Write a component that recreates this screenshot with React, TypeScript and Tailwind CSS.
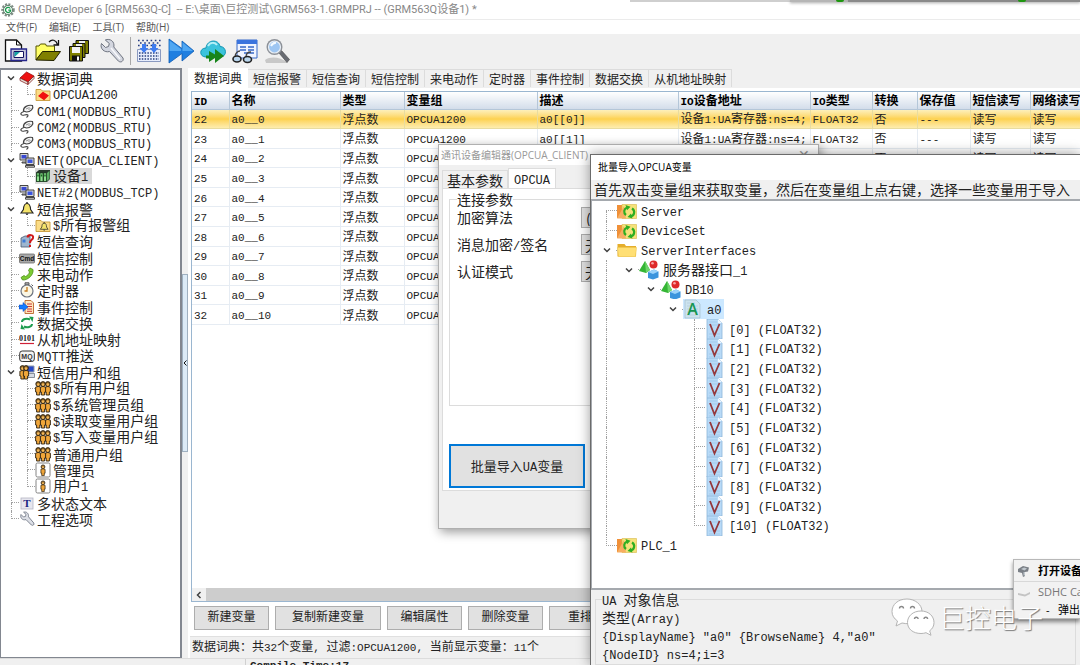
import { useState } from 'react';
import type { ReactNode } from 'react';
import clsx from 'clsx';

const UI_FONT = "font-['Open_Sans','Noto_Sans_CJK_SC',sans-serif]";
const TITLE_FONT = "font-['Roboto','Noto_Sans_CJK_SC',sans-serif]";
const SONG_FONT = "font-['Noto_Sans_CJK_SC',sans-serif]";

type IconName =
  | 'book' | 'folderBook' | 'serial' | 'net' | 'device' | 'bell' | 'folderBell' | 'query'
  | 'cmd' | 'phone' | 'timer' | 'event' | 'swap' | 'binary' | 'mqtt' | 'userGroup'
  | 'group' | 'user' | 'text' | 'wrench';

interface TreeRow {
  label: string;
  icon: IconName;
  depth: number;
  open?: boolean;
  last?: boolean;
  first?: boolean;
}

const PROJECT_TREE: TreeRow[] = [
  { label: '数据词典', icon: 'book', depth: 0, open: true, first: true },
  { label: 'OPCUA1200', icon: 'folderBook', depth: 1, last: true },
  { label: 'COM1(MODBUS_RTU)', icon: 'serial', depth: 0 },
  { label: 'COM2(MODBUS_RTU)', icon: 'serial', depth: 0 },
  { label: 'COM3(MODBUS_RTU)', icon: 'serial', depth: 0 },
  { label: 'NET(OPCUA_CLIENT)', icon: 'net', depth: 0, open: true },
  { label: '设备1', icon: 'device', depth: 1, last: true },
  { label: 'NET#2(MODBUS_TCP)', icon: 'net', depth: 0 },
  { label: '短信报警', icon: 'bell', depth: 0, open: true },
  { label: '$所有报警组', icon: 'folderBell', depth: 1, last: true },
  { label: '短信查询', icon: 'query', depth: 0 },
  { label: '短信控制', icon: 'cmd', depth: 0 },
  { label: '来电动作', icon: 'phone', depth: 0 },
  { label: '定时器', icon: 'timer', depth: 0 },
  { label: '事件控制', icon: 'event', depth: 0 },
  { label: '数据交换', icon: 'swap', depth: 0 },
  { label: '从机地址映射', icon: 'binary', depth: 0 },
  { label: 'MQTT推送', icon: 'mqtt', depth: 0 },
  { label: '短信用户和组', icon: 'userGroup', depth: 0, open: true },
  { label: '$所有用户组', icon: 'group', depth: 1 },
  { label: '$系统管理员组', icon: 'group', depth: 1 },
  { label: '$读取变量用户组', icon: 'group', depth: 1 },
  { label: '$写入变量用户组', icon: 'group', depth: 1 },
  { label: '普通用户组', icon: 'group', depth: 1 },
  { label: '管理员', icon: 'user', depth: 1 },
  { label: '用户1', icon: 'user', depth: 1, last: true },
  { label: '多状态文本', icon: 'text', depth: 0 },
  { label: '工程选项', icon: 'wrench', depth: 0, last: true },
];

type NodeIcon = 'server' | 'folder' | 'object' | 'array' | 'value';

interface OpcNode {
  label: string;
  icon: NodeIcon;
  depth: number;
  open?: boolean;
  first?: boolean;
  last?: boolean;
}

const OPC_TREE: OpcNode[] = [
  { label: 'Server', icon: 'server', depth: 0, first: true },
  { label: 'DeviceSet', icon: 'server', depth: 0 },
  { label: 'ServerInterfaces', icon: 'folder', depth: 0, open: true },
  { label: '服务器接口_1', icon: 'object', depth: 1, open: true, last: true },
  { label: 'DB10', icon: 'object', depth: 2, open: true, last: true },
  { label: 'a0', icon: 'array', depth: 3, open: true, last: true },
  ...Array.from({ length: 11 }, (_, i): OpcNode => ({
    label: `[${i}] (FLOAT32)`,
    icon: 'value',
    depth: 4,
    last: i === 10,
  })),
  { label: 'PLC_1', icon: 'server', depth: 0, last: true },
];

const TABS = ['数据词典', '短信报警', '短信查询', '短信控制', '来电动作', '定时器', '事件控制', '数据交换', '从机地址映射'];

const COLUMNS = [
  { title: 'ID', width: 'w-[37px]' },
  { title: '名称', width: 'w-[111px]' },
  { title: '类型', width: 'w-[64px]' },
  { title: '变量组', width: 'w-[133px]' },
  { title: '描述', width: 'w-[141px]' },
  { title: 'IO设备地址', width: 'w-[132px]' },
  { title: 'IO类型', width: 'w-[62px]' },
  { title: '转换', width: 'w-[45px]' },
  { title: '保存值', width: 'w-[53px]' },
  { title: '短信读写', width: 'w-[60px]' },
  { title: '网络读写', width: 'w-[60px]' },
];

const VARIABLES = Array.from({ length: 11 }, (_, i) => [
  String(22 + i), `a0__${i}`, '浮点数', 'OPCUA1200', `a0[[${i}]]`,
  '设备1:UA寄存器:ns=4;', 'FLOAT32', '否', '---', '读写', '读写',
]);

const ACTIONS = [
  { label: '新建变量', width: 'w-[75px]' },
  { label: '复制新建变量', width: 'w-[106px]' },
  { label: '编辑属性', width: 'w-[75px]' },
  { label: '删除变量', width: 'w-[75px]' },
  { label: '重排序号', width: 'w-[86px]' },
];

// Latin runs are half as wide as the Chinese characters beside them
function Song({ text, small }: { text: string; small?: boolean }) {
  return (
    <>
      {text.split(/([\x20-\x7e]+)/).filter(Boolean).map((part, i) =>
        /^[\x20-\x7e]/.test(part) ? (
          <span
            key={i}
            className={clsx("leading-none whitespace-pre font-['Liberation_Mono',monospace]", small ? 'text-[11px]' : 'text-[12px]')}
          >
            {part}
          </span>
        ) : (
          part
        ),
      )}
    </>
  );
}

function Chevron({ className }: { className?: string }) {
  return (
    <svg viewBox="0 0 8 8" className={clsx('h-2 w-2', className)} fill="none" stroke="#404040" strokeWidth="1.5">
      <path d="M1 2.5 4 5.5 7 2.5" />
    </svg>
  );
}

const personShape = (x: number) => (
  <g key={x}>
    <path d={`M${x - 2.6} 7.2q2.600-1.600 5.200 0v4.800h-1v3h-3.200v-3h-1z`} fill="#f0a63a" stroke="#2b2010" strokeWidth=".9" />
    <circle cx={x} cy="4" r="2.4" fill="#8a6224" stroke="#2b2010" strokeWidth=".9" />
    <circle cx={x} cy="4.600" r="1.3" fill="#f5b95a" />
  </g>
);

const folderBase = (
  <path d="M1 3.5h5l1.5 1.5H15v9.5H1z" fill="#fbdc86" stroke="#c79a3a" strokeWidth=".9" />
);

const bellShape = (
  <>
    <path d="M8 2.5c-3 0-3.4 3-3.6 6L2 12h12l-2.4-3.5c-.2-3-.6-6-3.6-6z" fill="#f4e36a" stroke="#222" strokeWidth="1.1" />
    <path d="M6.5 12.5q1.500 3 3 0zM7.300 1h1.400v1.500H7.300z" fill="#222" />
  </>
);

const wrenchShape = (
  <path
    d="M2 3.500 4.500 6l2-.6.5-2L4.600 1.200C7.500.3 10 2.500 9.500 5.800l5.300 6.200c.8 1.700-1 3-2.400 2L7 8.600C3.500 9.700.8 6.700 2 3.500z"
    fill="#dcdfe6"
    stroke="#747b88"
    strokeWidth=".9"
  />
);

const TREE_ICONS: Record<IconName, ReactNode> = {
  book: (
    <>
      <path d="M1 8 7.500 2 15 6 9 12z" fill="#ee1111" stroke="#8a0000" strokeWidth=".7" />
      <path d="M1 8v2.500L9 14.500V12zM9 12l6-6v2.500l-6 6z" fill="#e9e0d8" stroke="#7a1010" strokeWidth=".7" />
    </>
  ),
  folderBook: <>{folderBase}<path d="M4 10 8 6.500l5 3-4 4z" fill="#f01010" stroke="#f01010" strokeWidth="1.200" /></>,
  serial: (
    <>
      <path d="M4.500 8C4 4 9 1.500 13.500 2.500c1.500 3-2 6.500-6 6.500z" fill="#f4f4f4" stroke="#444" strokeWidth="1.200" />
      <path d="M7 6l3.500-1.500M9.500 7l2-2" stroke="#777" strokeWidth=".8" />
      <path d="M5 8.500C0 10 1.500 13 5.500 12s4.500.5 2 2.500" fill="none" stroke="#444" strokeWidth="1.200" />
    </>
  ),
  net: (
    <>
      <path d="M1 1.500h8v6.500H1zM3 10h5v1H3z" fill="#d8d8d8" stroke="#333" strokeWidth=".9" />
      <path d="M2.500 3h5v3.500h-5z" fill="#3849d0" />
      <path d="M7 6h8v6.500H7zM6.500 13.500h9v1.700h-9z" fill="#d8d8d8" stroke="#333" strokeWidth=".9" />
      <path d="M8.500 7.500h5v3.500h-5z" fill="#3b55e0" />
    </>
  ),
  device: (
    <>
      <path d="M1 4.500 4 2h11v9l-3 3H1z" fill="#28382c" />
      <path d="M1.500 5h3v8.500h-3zM5 5h3v8.500H5zM8.500 5h3v8.500h-3z" fill="#8fe08f" stroke="#173a1c" strokeWidth=".7" />
      <path d="M2.300 6.500h1.400v2H2.300zM5.800 6.500h1.400v2H5.800zM9.300 6.500h1.400v2H9.300z" fill="#176c20" />
      <path d="M12 5l2.500-2.300v8L12 13z" fill="#5cae62" />
    </>
  ),
  bell: bellShape,
  folderBell: <>{folderBase}<g transform="translate(4 4.500) scale(.65)">{bellShape}</g></>,
  query: (
    <>
      <path d="M2 5l4-2h5v11H2z" fill="#9eb6cf" stroke="#46596e" strokeWidth=".8" />
      <path d="M3.500 6.500h3v3h-3z" fill="#3d7bd5" />
      <path d="M8.500 4.500C9 1 15 1.500 14 5c-.5 2-3 2-3 5M11 12v2" fill="none" stroke="#d01818" strokeWidth="2" />
    </>
  ),
  cmd: (
    <>
      <rect x=".5" y="4" width="15" height="9" rx="1" fill="#a9a9a9" stroke="#6c6c6c" strokeWidth=".8" />
      <text x="8" y="11" textAnchor="middle" fontSize="6.500" fontWeight="700" fontFamily="Liberation Sans" fill="#111">Cmd</text>
    </>
  ),
  phone: (
    <path d="M11 2l3 1.500c1 5-5 11-10.500 10.500L2 11.500l3-2 1.500 1c2-.8 3.500-2.500 4-4.500L9.500 4.500z" fill="#7ccb34" stroke="#4c8e17" strokeWidth=".8" />
  ),
  timer: (
    <>
      <path d="M6 .8h4v2H6zM12.500 2.500l1.500 1.500" fill="#bbb" stroke="#555" strokeWidth="1" />
      <circle cx="8" cy="9" r="6" fill="#fbf7e4" stroke="#6d7480" strokeWidth="1.200" />
      <path d="M8 5v4H5.500" fill="none" stroke="#c67a1c" strokeWidth="1.300" />
    </>
  ),
  event: (
    <>
      <path d="M6 1.500h6l2.500 2.500v10.500H6z" fill="#ffe6bd" stroke="#b9672a" strokeWidth=".9" />
      <path d="M8 5h5M8 7.500h5M8 10h5M8 12.300h5" stroke="#cc3a3a" strokeWidth="1" />
      <path d="M0 6h4V3.500L9 8l-5 4.500V10H0z" fill="#167bff" stroke="#0843b8" strokeWidth=".5" />
    </>
  ),
  swap: (
    <g fill="none" stroke="#1d9c4e" strokeWidth="2">
      <path d="M3 7c0-3 5-4 8-2.500" />
      <path d="M13 9c0 3-5 4-8 2.500" />
      <path d="M10 1.500l4.500.5-1 5zM6 14.500l-4.500-.5 1-5z" fill="#1d9c4e" stroke="none" />
    </g>
  ),
  binary: (
    <>
      <text x="8" y="10" textAnchor="middle" fontSize="8" fontWeight="700" fontFamily="Liberation Serif" fill="#222">0101</text>
      <path d="M1 12.500h14" stroke="#d02038" strokeWidth="1.200" />
    </>
  ),
  mqtt: (
    <>
      <rect x=".7" y="3" width="14.600" height="10.500" rx="2.500" fill="#f4f4f4" stroke="#333" />
      <text x="8" y="10.800" textAnchor="middle" fontSize="7" fontWeight="700" fontFamily="Liberation Sans" fill="#333">MQ</text>
    </>
  ),
  userGroup: (
    <>
      <path d="M7 2h8v6H7z" fill="#2849c8" stroke="#8d98a8" strokeWidth="1" />
      <path d="M6 9.500h9.500v4H6z" fill="#d5dae3" stroke="#6d7684" strokeWidth=".8" />
      {personShape(3.5)}
      {personShape(7)}
    </>
  ),
  group: <>{personShape(3.2)}{personShape(12.8)}{personShape(8)}</>,
  user: (
    <>
      <rect x="1" y="1" width="14" height="14" rx="1.500" fill="#fff" stroke="#777" strokeWidth=".9" />
      <g transform="translate(1.600 1.600) scale(.8)">{personShape(8)}</g>
    </>
  ),
  text: (
    <>
      <rect x="2" y="3" width="12" height="11" fill="#e6e6ee" stroke="#b5b5c2" strokeWidth=".8" />
      <text x="8" y="12.300" textAnchor="middle" fontSize="11" fontWeight="700" fontFamily="Liberation Serif" fill="#1a1f80">T</text>
    </>
  ),
  wrench: wrenchShape,
};

const NODE_ICONS: Record<NodeIcon, ReactNode> = {
  server: (
    <>
      <path d="M0 4h6l2 2v11H0z" fill="#f09038" />
      <path d="M5 3.500h14.500V17.500H5z" fill="#f5e27a" stroke="#d9b84a" strokeWidth=".6" />
      <path d="M0 17.500 7 5l2 12.500z" fill="#f7ae62" />
      <path d="M9 14a4.300 4.300 0 0 1 1-7.500M15 7.500a4.300 4.300 0 0 1-1.500 8" fill="none" stroke="#2eae22" strokeWidth="2.200" />
      <path d="M8.500 4l5 1.700-3.500 3.500zM15.500 17.500l-5-1.500 3.500-3.500z" fill="#2eae22" />
    </>
  ),
  folder: (
    <>
      <path d="M.5 4h7l1.500 2h10v10.500H.5z" fill="#e5ae2c" />
      <path d="M.5 7.500h19l-1 9H1.500z" fill="#ffdf74" stroke="#f0c84e" strokeWidth=".6" />
    </>
  ),
  object: (
    <>
      <path d="M0 11 6 1l5 9-4 3z" fill="#35b535" />
      <path d="M6 1l5 9-4 3z" fill="#6ed66a" />
      <circle cx="14.500" cy="4.500" r="4" fill="#de2929" />
      <circle cx="13.500" cy="3.200" r="1.300" fill="#f7a3a3" />
      <path d="M9 12l6-2.500 4.500 2v6L14 19.500 9 18z" fill="#3b94dd" />
      <path d="M9 12l6-2.500 4.500 2L14 14z" fill="#9bd2fa" />
    </>
  ),
  array: (
    <>
      <path d="M2 1h11l4 4v14H2z" fill="#cde3ee" stroke="#a3bccb" strokeWidth=".7" />
      <path d="M4 4h8M4 7h11M4 10h11M4 13h11M4 16h11" stroke="#acc8d8" strokeWidth=".6" />
      <text x="9.500" y="16" textAnchor="middle" fontSize="16" fontWeight="600" fontFamily="Open Sans" fill="#169552">A</text>
    </>
  ),
  value: (
    <>
      <path d="M2 0h11l4 4v16H2z" fill="#b8daf7" stroke="#8db6d9" strokeWidth=".8" />
      <path d="M13 0v4h4z" fill="#eef7ff" />
      <path d="M4 3h8M4 6h11M4 15h11M4 18h11" stroke="#94c0e6" strokeWidth=".6" />
      <path d="M5 5 9.500 16.500 14.500 5" fill="none" stroke="#94383c" strokeWidth="1.800" />
    </>
  ),
};

function Guide({ wide, up, down, branch, open }: { wide?: boolean; up?: boolean; down?: boolean; branch?: boolean; open?: boolean }) {
  return (
    <span className={clsx('relative flex h-full shrink-0 flex-col', wide ? 'w-[22px]' : 'w-4')}>
      <span className={clsx('ml-[50%] flex-1', up && 'border-l border-dotted border-[#a0a0a0]', branch && 'border-b border-b-[#a0a0a0]', branch && !up && 'border-dotted')} />
      <span className={clsx('ml-[50%] flex-1', down && 'border-l border-dotted border-[#a0a0a0]')} />
      {open && (
        <span className="absolute inset-y-0 left-0 flex items-center bg-white pr-1">
          <Chevron className={wide ? 'ml-2' : 'ml-1'} />
        </span>
      )}
    </span>
  );
}

function ProjectTree() {
  const [selected, setSelected] = useState('设备1');

  return (
    <nav className={clsx('w-[182px] shrink-0 overflow-hidden border-t-2 border-r-2 border-b border-l border-[#828790] bg-white text-[14px] leading-4 text-[#222]', SONG_FONT)}>
      <ul className="grid h-[457px] auto-rows-fr pl-[2px]">
        {PROJECT_TREE.map((row) => (
          <li key={row.label} className="flex min-h-0 items-center">
            {row.depth === 1 && <Guide up down />}
            <Guide up={!row.first} down={!row.last} branch open={row.open} />
            <button
              className={clsx('flex h-full items-center gap-[2px] pr-1 whitespace-nowrap', selected === row.label && 'bg-[#d9d9d9]')}
              onClick={() => setSelected(row.label)}
            >
              <svg viewBox="0 0 16 16" className="h-4 w-4 shrink-0">{TREE_ICONS[row.icon]}</svg>
              <span className="leading-[14px]"><Song text={row.label} /></span>
            </button>
          </li>
        ))}
      </ul>
    </nav>
  );
}

function ToolButton({ label, children }: { label: string; children: ReactNode }) {
  return (
    <button aria-label={label} className="flex h-8 w-8 items-center justify-center">
      <svg viewBox="0 0 26 26" className="h-[26px] w-[26px]">{children}</svg>
    </button>
  );
}

function Toolbar() {
  return (
    <div className="flex h-[34px] shrink-0 items-center bg-[#f0f0f0]">
      <ToolButton label="新建">
        <path d="M2.500 2h11l5 5v16h-16z" fill="#fff" stroke="#111" strokeWidth="1.300" />
        <path d="M13.500 2v5h5" fill="none" stroke="#111" />
        <path d="M8 11h15.500v11.500H8z" fill="#c8c8dc" stroke="#26268c" strokeWidth="1.300" />
        <path d="M11 13.500h9.500v6H11z" fill="#fff" stroke="#101060" />
        <path d="M11.500 19 17 14h-5.500z" fill="#17a3a3" />
      </ToolButton>
      <ToolButton label="打开">
        <path d="M1 8h3l1.500-2h5l1 2h8v6H8l-7 8z" fill="#ffff66" stroke="#555500" />
        <path d="M1 22l6.500-8.500h18L19 22.500z" fill="#808000" stroke="#222200" />
        <path d="M14 4c3-3.500 7-2 8.500 2.500M23.500 2v5h-5" fill="none" stroke="#111" strokeWidth="1.300" />
      </ToolButton>
      <ToolButton label="保存">
        <path d="M9 2.500h12.500v13H9z" fill="#808000" stroke="#111" />
        <path d="M12 3h6v3h-6z" fill="#eee" />
        <path d="M6 5.500H18v14H6z" fill="#808000" stroke="#111" />
        <path d="M9 6h6v3h-6z" fill="#eee" />
        <path d="M2.500 8.500h13v14.500H2.500z" fill="#808000" stroke="#111" />
        <path d="M5 9h8v6H5z" fill="#f4f4f4" />
        <path d="M5 17.500h8V23H5z" fill="#111" />
        <path d="M10 18.500h2v4h-2z" fill="#fff" />
      </ToolButton>
      <ToolButton label="设置">
        <path d="M2.500 5.500 6.500 9.500l3-1 .8-3L6.300 2C11 0 16 3.500 14.800 9L24 20c1 3-1.800 5-4.500 3.200L10.500 13.500C5.500 15 .5 10.500 2.500 5.500z" fill="#d3d6df" stroke="#6f7480" />
        <path d="M12 10l9 11" stroke="#f7f8fb" strokeWidth="1.500" />
      </ToolButton>
      <span className="mx-[2px] h-7 w-px bg-[#a8a8a8]" />
      <ToolButton label="编译">
        <path d="M2 2.500h23M4 5h20M2 7.500h23" stroke="#223a80" strokeWidth="1.500" strokeDasharray="1.600 2.600" />
        <path d="M1.500 11.500h23v12h-23z" fill="#e8eefc" stroke="#8a9ac0" />
        <path d="M3 15h20M3 18h20M3 21h20" stroke="#273f7c" strokeWidth="1.300" strokeDasharray="1.500 1.300" />
        <path d="M6 6h4v4h2.500L8 15 3.500 10H6zM16 6h4v4h2.500L18 15l-4.500-5H16z" fill="#3f7cf0" />
      </ToolButton>
      <ToolButton label="下载">
        <path d="M1 1l13 9.500V3l12 10-12 10v-7.500L1 25z" fill="#1f7fe0" stroke="#0e5cb4" strokeWidth=".8" />
        <path d="M1.500 2.500 13 11v2H1.500zM14.500 4.500 25 13H14.500z" fill="#62b4f8" opacity=".75" />
      </ToolButton>
      <ToolButton label="云端下载">
        <path d="M6 19c-7 0-7-9 0-9C7 1 19 1 20 8.500c7 0 7.500 10.500 0 10.500z" fill="#3cc3dc" stroke="#1797b5" />
        <path d="M8 8c2-4 7-4 9-1" stroke="#b8f0f8" strokeWidth="2" fill="none" />
        <path d="M6 17.500h3v-4.500l6 3.500V11l9 7-9 7v-5l-6 4v-3.500H6z" fill="#17851b" />
      </ToolButton>
      <ToolButton label="监视">
        <path d="M5 2h20v18H5z" fill="#f0f4ff" stroke="#3768c8" />
        <path d="M5 2h20v4H5z" fill="#3b74de" />
        <path d="M8 9h6M16 9h6M8 12h6M16 12h6M12 15h10" stroke="#3768c8" strokeWidth="1.500" />
        <path d="M3 19c0-4 3-6 5-6M14 19c0-4 3-5 5-5" fill="none" stroke="#444" strokeWidth="1.300" />
        <ellipse cx="5" cy="21" rx="4" ry="3" fill="#b9d6ee" stroke="#222" strokeWidth="1.600" />
        <ellipse cx="15.500" cy="21.500" rx="4" ry="3" fill="#b9d6ee" stroke="#222" strokeWidth="1.600" />
      </ToolButton>
      <ToolButton label="查找">
        <path d="M1 22c6-4 15-3 23 3H2z" fill="#c8c8c8" />
        <path d="M15 15l2.500-2.500 8 9-2.500 3z" fill="#686b72" stroke="#444" strokeWidth=".6" />
        <circle cx="10.500" cy="9" r="8" fill="#8d9198" />
        <circle cx="10.500" cy="9" r="6" fill="#9ec6f2" stroke="#e8eef5" strokeWidth="1.200" />
        <path d="M7 8c1-2 3-3.500 5-3" stroke="#f4faff" strokeWidth="2" fill="none" />
      </ToolButton>
    </div>
  );
}

function VariablePanel() {
  const [tab, setTab] = useState('数据词典');
  const [current, setCurrent] = useState('22');

  return (
    <section className={clsx('flex min-w-0 flex-1 flex-col bg-white text-[12px] leading-4 text-[#222]', SONG_FONT)}>
      <div className="flex h-5 items-end bg-[#f0f0f0]">
        {TABS.map((t) => (
          <button
            key={t}
            onClick={() => setTab(t)}
            className={clsx('whitespace-nowrap', tab === t ? 'h-5 bg-white px-[6px]' : 'mb-px h-[18px] border-t border-r border-[#dcdcdc] px-[5px]')}
          >
            {t}
          </button>
        ))}
      </div>

      <div className="mt-[3px] ml-[3px] flex min-h-0 flex-1 flex-col border border-r-0 border-[#9ab6d0]">
        <div className="min-h-0 flex-1 overflow-hidden">
          <table className="h-[233px] w-[898px] table-fixed border-collapse text-left leading-[14px]">
            <thead>
              <tr className="h-[17px] bg-linear-to-b from-white to-[#d3ddea]">
                {COLUMNS.map((c) => (
                  <th key={c.title} className={clsx('overflow-hidden border-r border-b border-[#b4c6d8] p-0 pl-[2px] font-bold whitespace-nowrap text-black', c.width)}>
                    <Song text={c.title} small />
                  </th>
                ))}
              </tr>
            </thead>
            <tbody>
              {VARIABLES.map((cells) => (
                <tr
                  key={cells[0]}
                  onClick={() => setCurrent(cells[0])}
                  className={clsx(current === cells[0] && 'bg-linear-to-b from-[#fdf3c4] via-[#fdd24f] to-[#fdf0b8]')}
                >
                  {cells.map((cell, i) => (
                    <td
                      key={COLUMNS[i].title}
                      className={clsx('overflow-hidden border-r border-b p-0 pl-[2px] whitespace-nowrap', current === cells[0] ? 'border-[#e8dca0]' : 'border-[#e6ecf3]')}
                    >
                      <Song text={cell} small />
                    </td>
                  ))}
                </tr>
              ))}
            </tbody>
          </table>
        </div>
        <div className="flex h-[13px] shrink-0 bg-[#f0f0f0]">
          <button aria-label="向左滚动" className="flex w-[14px] items-center justify-center">
            <Chevron className="rotate-90" />
          </button>
          <span className="flex-1 bg-[#cdcdcd]" />
        </div>
      </div>

      <div className="mt-1 mb-[6px] ml-[6px] flex gap-[6px]">
        {ACTIONS.map((a) => (
          <button key={a.label} className={clsx('h-6 shrink-0 border border-[#adadad] bg-[#e1e1e1] pb-1 leading-[18px] whitespace-nowrap', a.width)}>
            {a.label}
          </button>
        ))}
      </div>
      <p className="ml-[2px] h-[22px] border-t border-[#e0e0e0] bg-[#f0f0f0] pl-[2px] leading-[18px] whitespace-nowrap">
        <Song text="数据词典：共32个变量, 过滤:OPCUA1200, 当前显示变量：11个" small />
      </p>
    </section>
  );
}

function DeviceDialog() {
  return (
    <section
      aria-label="通讯设备编辑器"
      className={clsx('absolute top-[144px] left-[438px] flex h-[385px] w-[381px] flex-col border border-[#b0b0b0] bg-[#f0f0f0] text-[14px] leading-4 text-[#222] shadow-[2px_3px_10px_rgba(0,0,0,0.4)]', SONG_FONT)}
    >
      <header className={clsx('flex h-5 items-center justify-between bg-white pr-2 pl-[2px] text-[10px] text-[#999]', UI_FONT)}>
        <h2>通讯设备编辑器(OPCUA_CLIENT)</h2>
        <button aria-label="关闭" className="text-[14px] leading-4">✕</button>
      </header>
      <div className="mt-[3px] ml-[3px] flex h-5 items-end">
        <button className="h-[18px] border border-b-0 border-[#dcdcdc] px-1">基本参数</button>
        <button className="h-5 border border-b-0 border-[#dcdcdc] bg-white px-[5px]"><Song text="OPCUA" /></button>
      </div>
      <div className="ml-[3px] h-[303px] border border-[#dcdcdc] bg-white px-[6px] pt-[2px]">
        <fieldset className="h-[215px] border border-[#dcdcdc] pl-[7px]">
          <legend className="px-0">连接参数</legend>
          <div className="grid auto-rows-[21px] grid-cols-[124px_200px] gap-y-[6px]">
            <label htmlFor="algorithm" className="leading-5">加密算法</label>
            <select id="algorithm" className="appearance-none border border-[#adadad] bg-[#e1e1e1] pl-1 leading-4">
              <option>(无)</option>
            </select>
            <label htmlFor="signature" className="leading-5"><Song text="消息加密/签名" /></label>
            <select id="signature" className="appearance-none border border-[#adadad] bg-[#e1e1e1] pl-[3px] leading-4">
              <option>无</option>
            </select>
            <label htmlFor="auth" className="leading-5">认证模式</label>
            <select id="auth" className="appearance-none border border-[#adadad] bg-[#e1e1e1] pl-[3px] leading-4">
              <option>无</option>
            </select>
          </div>
        </fieldset>
        <button className="mt-[38px] h-11 w-[136px] border-2 border-[#0078d7] bg-[#e1e1e1] text-[13px]">
          <Song text="批量导入UA变量" />
        </button>
      </div>
    </section>
  );
}

function ImportDialog() {
  const [selected, setSelected] = useState('a0');

  return (
    <section
      aria-label="批量导入OPCUA变量"
      className={clsx('absolute top-[154px] right-0 bottom-0 left-[590px] flex flex-col border-t border-l border-[#6b6b6b] bg-[#f0f0f0] text-[14px] leading-4 text-[#222] shadow-[0_0_12px_rgba(0,0,0,0.4)]', SONG_FONT)}
    >
      <h2 className={clsx('h-[25px] shrink-0 bg-white pl-[7px] text-[10px] leading-6 text-black', UI_FONT)}>批量导入OPCUA变量</h2>
      <p className="h-[19px] shrink-0 pl-[3px] leading-[18px] whitespace-nowrap">首先双击变量组来获取变量，然后在变量组上点右键，选择一些变量用于导入</p>
      <div className="min-h-0 flex-1 overflow-hidden border-t-2 border-b-2 border-l border-[#a5a9ae] bg-white">
        <ul className="grid h-[354px] auto-rows-fr pl-[3px]">
          {OPC_TREE.map((node) => (
            <li key={node.label} className="flex min-h-0 items-center">
              {Array.from({ length: node.depth }, (_, d) => (
                <Guide key={d} wide up={d === 0} down={d === 0} />
              ))}
              <Guide wide up={!node.first} down={!node.last} branch open={node.open} />
              <button
                onClick={() => setSelected(node.label)}
                className={clsx('flex h-full items-center gap-1 pr-[3px] whitespace-nowrap', selected === node.label && 'bg-[#cce8ff]')}
              >
                <svg viewBox="0 0 20 20" className="h-5 w-5 shrink-0">{NODE_ICONS[node.icon]}</svg>
                <span className="leading-[14px]"><Song text={node.label} /></span>
              </button>
            </li>
          ))}
        </ul>
      </div>
      <fieldset className="mx-1 h-[75px] shrink-0 border border-[#dcdcdc] pl-[6px] leading-[18px] whitespace-nowrap">
        <legend><Song text="UA 对象信息" /></legend>
        <p><Song text="类型(Array)" /></p>
        <p className="h-[18px]"><Song text={'{DisplayName} "a0" {BrowseName} 4,"a0"'} /></p>
        <p className="h-[18px]"><Song text="{NodeID} ns=4;i=3" /></p>
      </fieldset>
    </section>
  );
}

function DeviceMenu() {
  return (
    <ul className={clsx('absolute right-0 bottom-[46px] w-[67px] overflow-hidden border border-r-0 border-[#b8b8b8] bg-[#f2f2f2] text-[11px] leading-4 whitespace-nowrap text-black shadow-[0_3px_4px_rgba(0,0,0,0.45)]', UI_FONT)}>
      <li className="flex h-[21px] items-center gap-2 pl-1 font-bold">
        <svg viewBox="0 0 12 12" className="h-3 w-3 shrink-0">
          <path d="M0 4l5-3 6 1.500-1 4-3 .5v4L5 12l-1-4-4-1z" fill="#7b8087" />
          <path d="M3 4 6 2.500l3 1L6.500 5.500zM5.500 7h1.500v3.500H5.500z" fill="#c2c9cf" />
        </svg>
        <button>打开设备和打印机</button>
      </li>
      <li className="flex h-[21px] items-center gap-2 border-t border-[#d8d8d8] pl-1 text-[#777]">
        <svg viewBox="0 0 12 12" className="h-3 w-3 shrink-0">
          <path d="M0 7l7 1.500L12 6v2l-5 2.500L0 9z" fill="#c4c4c4" />
        </svg>
        SDHC Card
      </li>
      <li className="h-4 pl-8"><button className="whitespace-pre">-   弹出</button></li>
    </ul>
  );
}

function Watermark() {
  return (
    <div className={clsx('pointer-events-none absolute right-[37px] bottom-[29px] flex items-center gap-1 text-[26px] leading-9 font-light text-white [text-shadow:1px_1px_1px_#777]', SONG_FONT)}>
      <svg viewBox="0 0 44 38" className="h-[38px] w-11">
        <g fill="#fff" stroke="#b4b4b4" strokeWidth="1">
          <path d="M16 1C7 1 1 6.500 1 13.500c0 4 2 7 5.500 9.500L5 28l6-3c10 2.500 20-2 20-11.500C31 6.500 24 1 16 1z" />
          <path d="M30 13c-8 0-13.500 5-13.500 11.500S22 35.500 30 35.500c2 0 3.500-.3 5-.8l5 2.600-1.300-4.500c2.800-2 4.300-4.800 4.300-8.300C43 18 37.500 13 30 13z" />
        </g>
        <g fill="none" stroke="#888" strokeWidth="1.400">
          <path d="M8.500 10.500a2 2 0 0 1 4 0M19.500 10.500a2 2 0 0 1 4 0M23.500 21a1.800 1.800 0 0 1 3.600 0M33 21a1.800 1.800 0 0 1 3.600 0" />
        </g>
      </svg>
      <span>巨控电子</span>
    </div>
  );
}

export default function App() {
  return (
    <div className="relative flex h-screen flex-col overflow-hidden bg-[#f0f0f0]">
      <header className={clsx('flex h-5 shrink-0 items-center gap-[3px] border-b border-[#ebebeb] bg-white pl-[1px] text-[11px] leading-4 text-[#888]', TITLE_FONT)}>
        <svg viewBox="0 0 14 14" className="h-[14px] w-[14px] shrink-0">
          <circle cx="7" cy="7" r="5.500" fill="#e8efe9" stroke="#7d8a83" strokeWidth="2.500" strokeDasharray="2 1.200" />
          <circle cx="7" cy="7" r="4.500" fill="#fff" stroke="#5b7f69" />
          <path d="M9.300 5.500A2.600 2.600 0 1 0 9.500 8V7.200H7.300" fill="none" stroke="#169a4b" strokeWidth="1.300" />
        </svg>
        <h1 className="whitespace-pre">GRM Developer 6 [GRM563Q-C]  -- E:\桌面\巨控测试\GRM563-1.GRMPRJ -- (GRM563Q设备1) *</h1>
      </header>
      {/* bottom edge of the floating panel above the window */}
      <div className="absolute top-0 right-0 flex h-[2px] w-[450px] bg-[#cfcfcf]">
        <span className="ml-[160px] w-[58px] bg-[#b5b5b5] shadow-[0_1px_3px_#999]" />
        <span className="flex-1 bg-[#8a8a8a] shadow-[0_1px_3px_#999]" />
      </div>
      <div className="absolute top-0 right-[54px] flex w-[190px] justify-between">
        <span className="h-[2px] w-2 rounded-b bg-[#1e9610]" />
        <span className="h-[2px] w-2 rounded-b bg-[#1e9610]" />
      </div>

      <div className={clsx('flex h-[14px] shrink-0 items-center gap-3 bg-white pl-[6px] text-[10px] leading-3 text-[#555]', UI_FONT)}>
        <button>文件(F)</button>
        <button>编辑(E)</button>
        <button>工具(T)</button>
        <button>帮助(H)</button>
      </div>

      <Toolbar />

      <main className="flex min-h-0 flex-1">
        <ProjectTree />
        <div className="flex w-[6px] shrink-0 items-center">
          <button aria-label="折叠" className="flex h-[178px] w-[6px] items-center justify-center border border-[#9fb0c0] bg-[#dcebf7]">
            <svg viewBox="0 0 4 6" className="h-[6px] w-1" fill="none" stroke="#111"><path d="M3.500.5 1 3l2.500 2.500" /></svg>
          </button>
        </div>
        <VariablePanel />
      </main>

      <footer className="flex h-[7px] shrink-0 overflow-hidden border-t border-[#dcdcdc] text-[11px] font-bold text-[#222]">
        <span className="w-[246px] shrink-0 border-r border-[#d0d0d0]" />
        <span className="pl-1 font-['Liberation_Mono',monospace] leading-[14px]">Compile Time:17</span>
      </footer>

      <DeviceDialog />
      <ImportDialog />
      <DeviceMenu />
      <Watermark />
    </div>
  );
}
